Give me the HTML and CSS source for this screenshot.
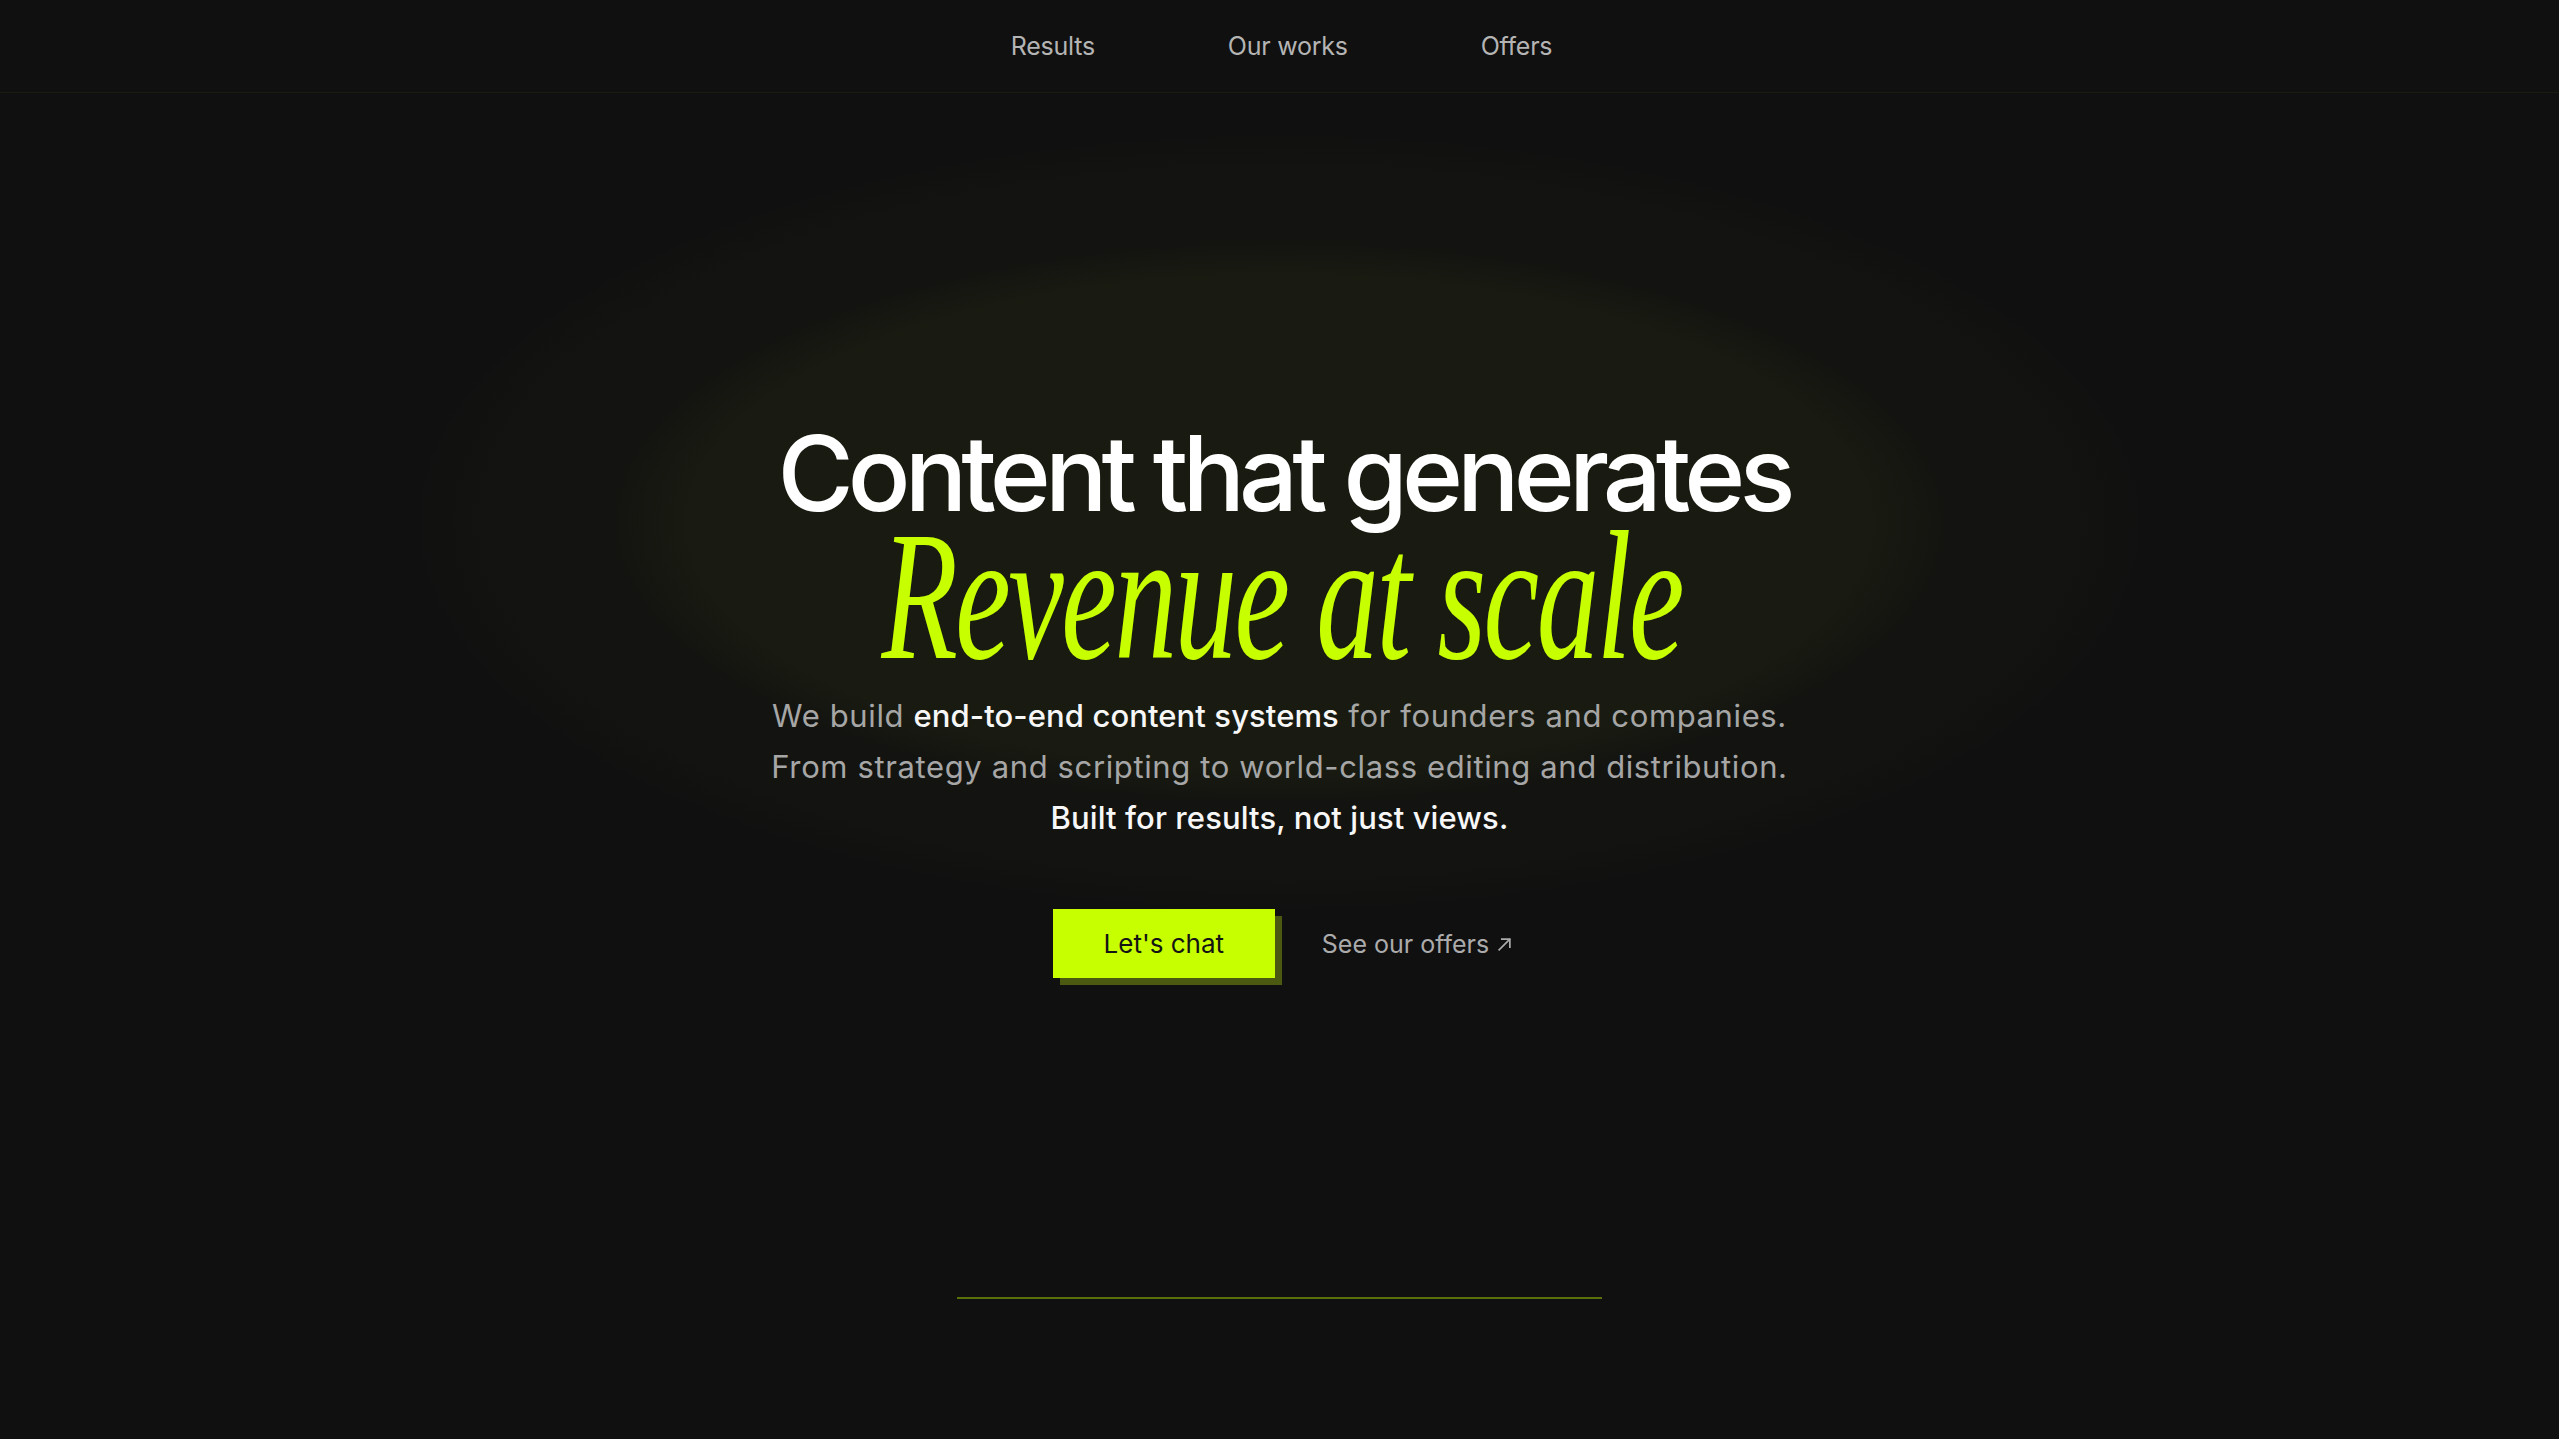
FILE: index.html
```html
<!DOCTYPE html>
<html lang="en">
<head>
<meta charset="utf-8">
<title>Content that generates revenue at scale</title>
<link rel="stylesheet" href="styles.css">
</head>
<body>
<header class="topbar">
  <nav class="nav">
    <a class="nav-link" href="#results">Results</a>
    <a class="nav-link" href="#works">Our works</a>
    <a class="nav-link" href="#offers">Offers</a>
  </nav>
</header>
<main class="hero">
  <h1 class="title">
    <span class="title-main">Content that generates</span>
    <span class="title-accent"><span class="accent-inner">Revenue at scale</span></span>
  </h1>
  <p class="lead">
    We build <strong>end-to-end content systems</strong> for founders and companies.<br>
    From strategy and scripting to world-class editing and distribution.<br>
    <strong>Built for results, not just views.</strong>
  </p>
  <div class="actions">
    <a class="btn-primary" href="#chat">Let's chat</a>
    <a class="btn-link" href="#offers">See our offers
      <svg class="arrow" viewBox="0 0 14 14" width="15" height="15" aria-hidden="true"><path d="M2 12 L12 2 M4.5 2 H12 V9.5" fill="none" stroke="currentColor" stroke-width="1.6" stroke-linecap="square"/></svg>
    </a>
  </div>
  <div class="divider"></div>
</main>
</body>
</html>
```
FILE: styles.css
```css
* { box-sizing: border-box; }
html, body { margin: 0; padding: 0; }
body {
  background: #101010;
  color: #a6a6a6;
  font-family: "Inter", "Noto Sans", sans-serif;
  min-height: 100vh;
  overflow: hidden;
}
a { text-decoration: none; color: inherit; }

.topbar {
  height: 93px;
  border-bottom: 1px solid rgba(200, 255, 0, 0.05);
  display: flex;
  align-items: center;
  justify-content: center;
}
.nav {
  display: flex;
  gap: 133px;
  padding-left: 4px;
}
.nav-link {
  font-size: 25px;
  color: #b4b4b4;
  letter-spacing: -0.01em;
}

.hero {
  min-height: calc(100vh - 93px);
  padding-top: 333px;
  display: flex;
  flex-direction: column;
  align-items: center;
  text-align: center;
  background:
    radial-gradient(ellipse 668px 280px at 50% 429px, rgba(205, 255, 40, 0.032) 0%, rgba(205, 255, 40, 0.03) 88%, rgba(205, 255, 40, 0) 100%),
    radial-gradient(ellipse 872px 392px at 50% 429px, rgba(205, 255, 40, 0.017) 0%, rgba(205, 255, 40, 0.015) 90%, rgba(205, 255, 40, 0) 100%);
}

.title {
  margin: 0;
  font-weight: normal;
  display: flex;
  flex-direction: column;
  align-items: center;
}
.title-main {
  display: block;
  font-family: "Inter", sans-serif;
  font-weight: 500;
  font-size: 104px;
  line-height: 95px;
  letter-spacing: -0.057em;
  color: #ffffff;
  padding-left: 8px;
}
.title-accent {
  display: block;
  font-family: "Liberation Serif", "Times New Roman", serif;
  font-style: italic;
  font-size: 184px;
  line-height: 150px;
  color: #c8ff00;
  padding-left: 4px;
}
.accent-inner {
  display: inline-block;
  letter-spacing: -0.02em;
  transform: scaleX(0.68);
  transform-origin: center;
}

.lead {
  margin: 19px 0 0;
  font-size: 31px;
  line-height: 51px;
  color: #a6a6a6;
  letter-spacing: 0.02em;
}
.lead strong {
  font-weight: 500;
  color: #f7f7f7;
  letter-spacing: 0.003em;
}

.actions {
  margin-top: 66px;
  display: flex;
  align-items: center;
  gap: 47px;
  padding-left: 6px;
}
.btn-primary {
  display: flex;
  align-items: center;
  justify-content: center;
  width: 222px;
  height: 69px;
  background: #c8ff00;
  color: #141414;
  font-size: 26px;
  box-shadow: 7px 7px 0 #4b5a10;
}
.btn-link {
  display: flex;
  align-items: center;
  gap: 8px;
  font-size: 25px;
  color: #ababab;
}
.arrow { display: block; margin-top: 1px; }

.divider {
  margin-top: 319px;
  width: 645px;
  height: 2px;
  background: rgba(200, 255, 0, 0.4);
}
```
